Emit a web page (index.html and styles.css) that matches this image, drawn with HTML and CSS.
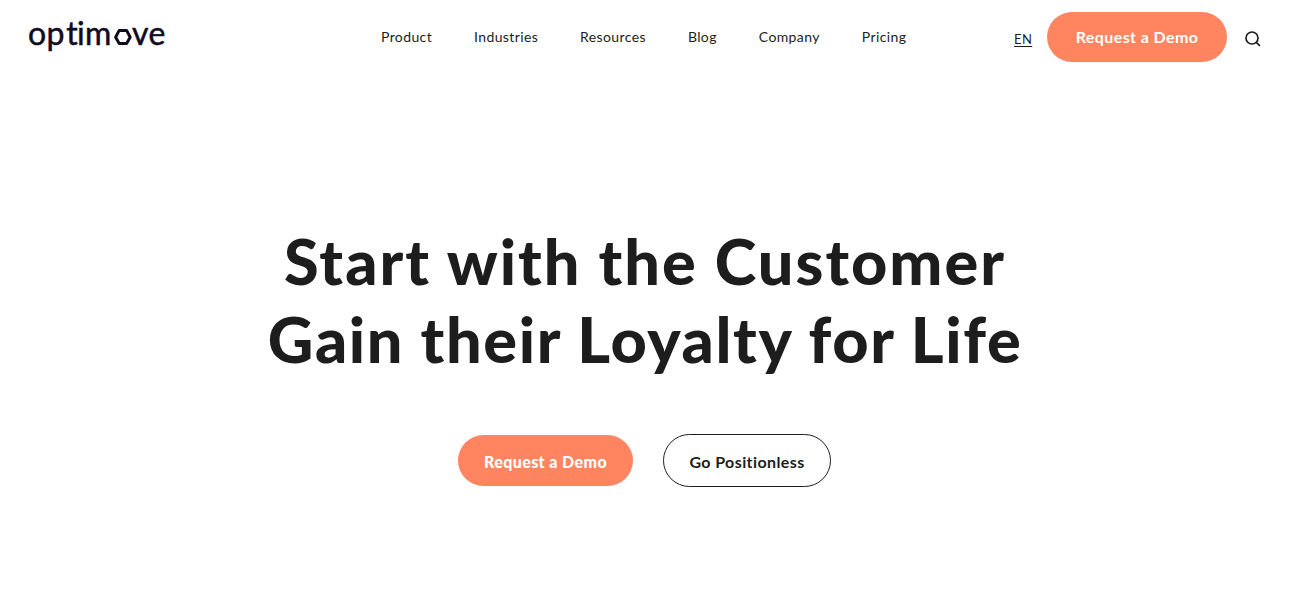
FILE: index.html
```html
<!DOCTYPE html>
<html lang="en">
<head>
    <meta charset="UTF-8">
    <meta name="viewport" content="width=device-width, initial-scale=1.0">
    <title>Optimove</title>
    <link rel="stylesheet" href="styles.css">
</head>
<body>
    <!-- Header -->
    <header class="header">
        <a class="logo" href="#" aria-label="optimove">
            <svg width="140" height="36" viewBox="0 0 140 36">
                <text class="logo-text" y="27" x="0 18.6 38.2 49 57.1">optim</text>
                <path d="M91.2 12.4h7.4l3.6 6.9-3.6 6.2h-7.4l-3.6-6.2z" fill="none" stroke="#130c20" stroke-width="3" stroke-linejoin="round"/>
                <text class="logo-text" y="27" x="104 120.4">ve</text>
            </svg>
        </a>
        <nav class="menu">
            <a href="#">Product</a>
            <a href="#">Industries</a>
            <a href="#">Resources</a>
            <a href="#">Blog</a>
            <a href="#">Company</a>
            <a href="#">Pricing</a>
        </nav>
        <div class="actions">
            <a class="lang" href="#">EN</a>
            <a class="btn btn-header" href="#">Request a Demo</a>
            <button class="search" aria-label="Search">
                <svg width="16" height="16" viewBox="0 0 16 16" fill="none" stroke="#1d1d1d" stroke-width="1.7">
                    <circle cx="7" cy="7" r="6"/>
                    <path d="M11.3 11.3l3.6 3.6"/>
                </svg>
            </button>
        </div>
    </header>

    <!-- Hero -->
    <main class="hero">
        <h1>
            <span class="line-one">Start with the Customer</span>
            <span class="line-two">Gain their Loyalty for Life</span>
        </h1>
        <div class="hero-buttons">
            <a class="btn btn-demo" href="#">Request a Demo</a>
            <a class="btn btn-outline" href="#">Go Positionless</a>
        </div>
    </main>
</body>
</html>
```
FILE: styles.css
```css
/* General */
* {
    box-sizing: border-box;
}
body {
    margin: 0;
    background-color: #fff;
    color: #1d1d1d;
    font-family: Lato, "Open Sans", sans-serif;
}
a {
    color: inherit;
    text-decoration: none;
}

/* Header */
.header {
    display: flex;
    height: 74px;
    padding-left: 28px;
}
.logo {
    width: 353px;
    padding-top: 18px;
}
.logo svg {
    display: block;
    overflow: visible;
}
.logo-text {
    font-size: 32px;
    fill: #130c20;
    stroke: #130c20;
    stroke-width: 0.5px;
}
.menu {
    display: flex;
    gap: 42px;
    width: 633px;
    font-size: 14px;
    letter-spacing: 0.38px;
    line-height: 74px;
    white-space: nowrap;
}
.actions {
    display: flex;
    align-items: center;
}
.lang {
    width: 18px;
    margin: 3px 15px 0 0;
    font-size: 13px;
    letter-spacing: 0.4px;
    text-decoration: underline;
    text-underline-offset: 2px;
}
.search {
    display: flex;
    margin: 4px 0 0 18px;
    padding: 0;
    border: none;
    background: none;
    cursor: pointer;
}

/* Buttons */
.btn {
    display: flex;
    align-items: center;
    justify-content: center;
    border-radius: 27px;
    background-color: #ff8560;
    color: #fff;
    font-size: 16px;
    font-weight: bold;
    letter-spacing: 0.4px;
    white-space: nowrap;
}
.btn-header {
    width: 180px;
    height: 50px;
    padding-bottom: 2px;
}
.btn-demo {
    width: 175px;
    height: 51px;
    padding-top: 1px;
    font-weight: 900;
}
.btn-outline {
    width: 168px;
    height: 53px;
    padding-top: 1px;
    border: 1px solid #1d1d1d;
    background-color: #fff;
    color: #1d1d1d;
}

/* Hero */
.hero {
    width: 1290px;
    padding-top: 148px;
}
h1 {
    margin: 0;
    font-size: 63px;
    font-weight: 900;
    line-height: 78px;
    text-align: center;
    white-space: nowrap;
}
h1 span {
    display: block;
}
.line-one {
    letter-spacing: 2px;
}
.line-two {
    letter-spacing: 1.6px;
}
.hero-buttons {
    display: flex;
    align-items: center;
    justify-content: center;
    gap: 30px;
    width: 1289px;
    margin-top: 56px;
}
```
